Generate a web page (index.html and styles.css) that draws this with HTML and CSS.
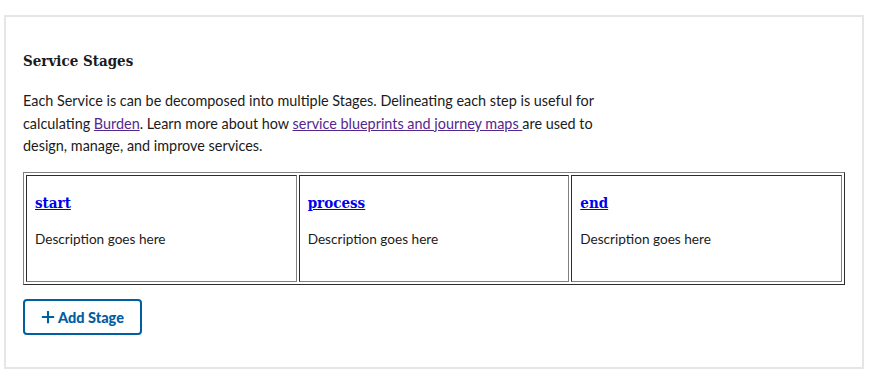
FILE: index.html
```html
<!DOCTYPE html>
<html lang="en">

<head>
    <meta charset="UTF-8">
    <meta name="viewport" content="width=device-width, initial-scale=1.0">
    <title>Service Stages</title>
    <link rel="stylesheet" href="styles.css">
</head>

<body>
    <div class="card">
        <h2 class="card-title">Service Stages</h2>
        <p class="intro">Each Service is can be decomposed into multiple Stages. Delineating each step is useful for
            calculating <a href="#" class="visited">Burden</a>. Learn more about how <a href="#" class="visited">service blueprints and journey maps </a>are used to
            design, manage, and improve services.</p>

        <table class="stages" border="1">
            <tr>
                <td>
                    <h3 class="stage-name"><a href="#">start</a></h3>
                    <p class="stage-desc">Description goes here</p>
                </td>
                <td>
                    <h3 class="stage-name"><a href="#">process</a></h3>
                    <p class="stage-desc">Description goes here</p>
                </td>
                <td>
                    <h3 class="stage-name"><a href="#">end</a></h3>
                    <p class="stage-desc">Description goes here</p>
                </td>
            </tr>
        </table>

        <button type="button" class="btn-outline">
            <svg class="icon" viewBox="0 0 16 16" width="14" height="14" aria-hidden="true">
                <path d="M6.8 1h2.4v5.8H15v2.4H9.2V15H6.8V9.2H1V6.8h5.8z" fill="currentColor" />
            </svg>Add Stage
        </button>
    </div>
</body>

</html>
```

FILE: styles.css
```css
body {
    margin: 0;
    padding: 15px 5px 15px 4px;
    background-color: #ffffff;
    color: #1b1b1b;
    font-family: 'Lato', sans-serif;
}

.card {
    border: 2px solid #e6e6e6;
    padding: 35px 17px 32px;
}

.card-title {
    margin: 0 0 20px;
    font-family: 'DejaVu Serif', serif;
    font-stretch: condensed;
    font-size: 15px;
    line-height: 18px;
    font-weight: bold;
}

.intro {
    margin: 0 0 14px;
    max-width: 590px;
    font-size: 14.4px;
    line-height: 22.5px;
}

.intro a.visited {
    color: #54278f;
}

.stages {
    width: 100%;
    border-color: #808080;
    border-spacing: 2px;
    table-layout: fixed;
    margin-bottom: 14px;
}

.stages td {
    padding: 18px 8px 31px;
    vertical-align: top;
}

.stage-name {
    margin: 0 0 16px;
    font-family: 'DejaVu Serif', serif;
    font-stretch: condensed;
    font-size: 15px;
    line-height: 18px;
    font-weight: bold;
}

.stage-name a {
    color: #0000ee;
}

.stage-desc {
    margin: 0;
    font-size: 13.6px;
    line-height: 22.5px;
}

.btn-outline {
    display: inline-flex;
    align-items: center;
    gap: 3px;
    height: 36px;
    padding: 0 16px;
    background-color: #ffffff;
    border: 2px solid #005ea2;
    border-radius: 4px;
    color: #005ea2;
    font-family: 'Lato', sans-serif;
    font-size: 14.5px;
    font-weight: 900;
    cursor: pointer;
}
```
